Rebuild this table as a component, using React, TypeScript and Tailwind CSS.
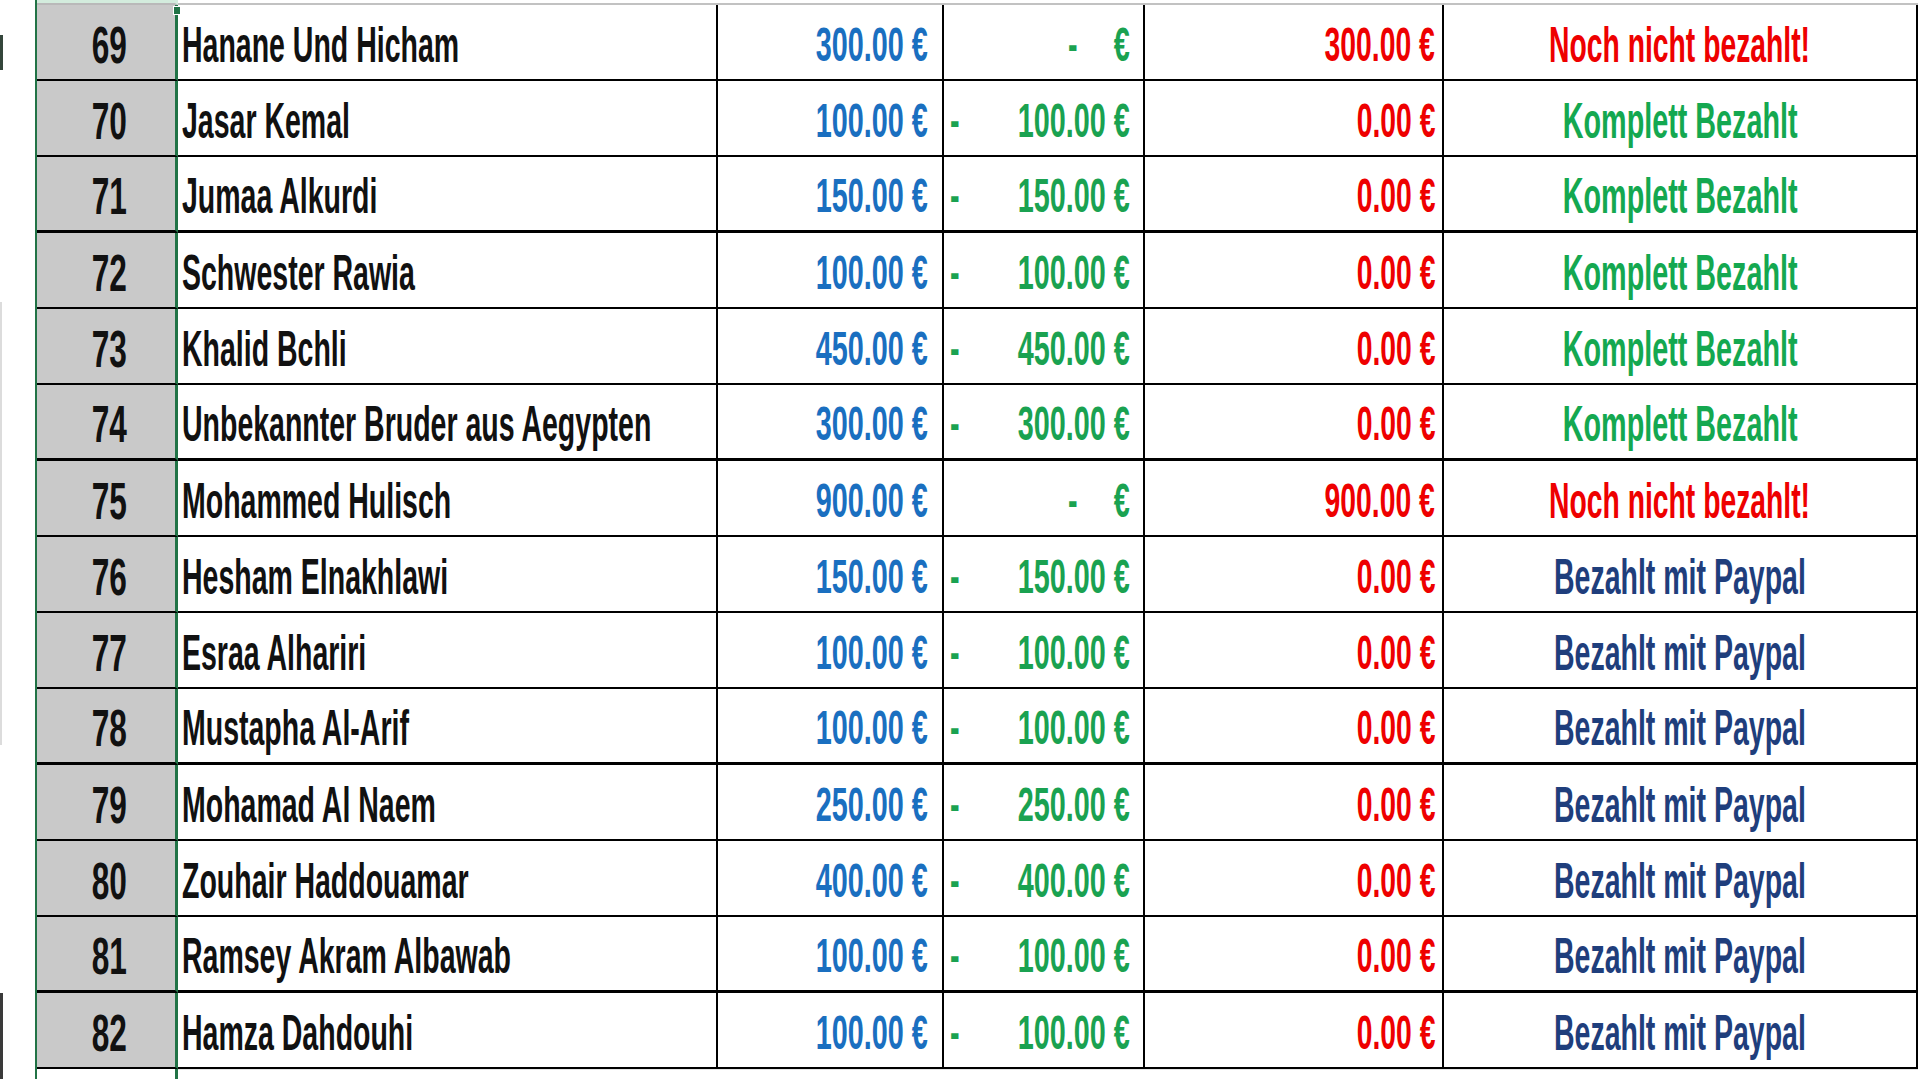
type Row = {
  n: number;
  name: string;
  amount: string;
  paid: string | null;
  rest: string;
  status: "open" | "full" | "paypal";
};

const rows: Row[] = [
  { n: 69, name: "Hanane Und Hicham", amount: "300.00", paid: null, rest: "300.00", status: "open" },
  { n: 70, name: "Jasar Kemal", amount: "100.00", paid: "100.00", rest: "0.00", status: "full" },
  { n: 71, name: "Jumaa Alkurdi", amount: "150.00", paid: "150.00", rest: "0.00", status: "full" },
  { n: 72, name: "Schwester Rawia", amount: "100.00", paid: "100.00", rest: "0.00", status: "full" },
  { n: 73, name: "Khalid Bchli", amount: "450.00", paid: "450.00", rest: "0.00", status: "full" },
  { n: 74, name: "Unbekannter Bruder aus Aegypten", amount: "300.00", paid: "300.00", rest: "0.00", status: "full" },
  { n: 75, name: "Mohammed Hulisch", amount: "900.00", paid: null, rest: "900.00", status: "open" },
  { n: 76, name: "Hesham Elnakhlawi", amount: "150.00", paid: "150.00", rest: "0.00", status: "paypal" },
  { n: 77, name: "Esraa Alhariri", amount: "100.00", paid: "100.00", rest: "0.00", status: "paypal" },
  { n: 78, name: "Mustapha Al-Arif", amount: "100.00", paid: "100.00", rest: "0.00", status: "paypal" },
  { n: 79, name: "Mohamad Al Naem", amount: "250.00", paid: "250.00", rest: "0.00", status: "paypal" },
  { n: 80, name: "Zouhair Haddouamar", amount: "400.00", paid: "400.00", rest: "0.00", status: "paypal" },
  { n: 81, name: "Ramsey Akram Albawab", amount: "100.00", paid: "100.00", rest: "0.00", status: "paypal" },
  { n: 82, name: "Hamza Dahdouhi", amount: "100.00", paid: "100.00", rest: "0.00", status: "paypal" },
];

// rows whose bottom line is drawn heavier
const thick = [71, 74, 78, 81];

function Status({ kind }: { kind: Row["status"] }) {
  if (kind === "open")
    return <span className="inline-block shrink-0 whitespace-nowrap text-[50px] leading-none font-bold text-[#ee0000] scale-x-[0.566] origin-center">Noch nicht bezahlt!</span>;
  if (kind === "full")
    return <span className="inline-block shrink-0 whitespace-nowrap text-[50px] leading-none font-bold text-[#14a850] scale-x-[0.575] origin-center">Komplett Bezahlt</span>;
  return <span className="inline-block shrink-0 whitespace-nowrap text-[50px] leading-none font-bold text-[#1f3e7c] scale-x-[0.57] origin-center">Bezahlt mit Paypal</span>;
}

function TableRow({ r }: { r: Row }) {
  const line = thick.includes(r.n) ? "border-b-[3px]" : "border-b-2";
  return (
    <div className="flex h-[76px]">
      <div className={`w-[141px] flex items-end justify-center pl-[6px] pb-[8px] bg-[#c9c9c9] border-r-[3px] border-r-[#217346] border-b-black ${line}`}>
        <span className="inline-block text-[51px] leading-none font-bold text-[#111] scale-x-[0.62] origin-center">{r.n}</span>
      </div>
      <div className={`w-[540px] flex items-end pl-[4px] pb-[9px] border-r-2 border-black ${line}`}>
        <span className="inline-block whitespace-nowrap text-[50px] leading-none font-bold text-[#111] scale-x-[0.57] origin-left">{r.name}</span>
      </div>
      <div className={`w-[226px] flex items-end justify-end pr-[14px] pb-[10px] border-r-2 border-black ${line}`}>
        <span className="inline-block shrink-0 whitespace-nowrap text-[48px] leading-none font-bold text-[#1a6fc0] scale-x-[0.6] origin-right">{r.amount} €</span>
      </div>
      <div className={`w-[201px] flex items-end pl-[6px] pr-[13px] pb-[10px] border-r-2 border-black ${line}`}>
        <div className="w-[10px] shrink-0">
          {r.paid && <span className="inline-block text-[48px] leading-none font-bold text-[#1aa251] scale-x-[0.6] origin-left">-</span>}
        </div>
        <div className="flex-1 min-w-0 flex justify-end">
          {r.paid ? (
            <span className="inline-block shrink-0 whitespace-nowrap text-[48px] leading-none font-bold text-[#1aa251] scale-x-[0.6] origin-right">{r.paid} €</span>
          ) : (
            <span className="inline-block shrink-0 whitespace-nowrap text-[48px] leading-none font-bold text-[#1aa251] scale-x-[0.6] origin-right">
              <span className="mr-[60px]">-</span>€
            </span>
          )}
        </div>
      </div>
      <div className={`w-[299px] flex items-end justify-end pr-[7px] pb-[10px] border-r-2 border-black ${line}`}>
        <span className="inline-block shrink-0 whitespace-nowrap text-[48px] leading-none font-bold text-[#ee0000] scale-x-[0.59] origin-right">{r.rest} €</span>
      </div>
      <div className={`w-[474px] flex items-end justify-center pb-[9px] border-r-2 border-black ${line}`}>
        <Status kind={r.status} />
      </div>
    </div>
  );
}

export default function App() {
  return (
    <div className="w-[1920px] h-[1079px] overflow-hidden bg-white flex font-['Liberation_Sans',Arial,sans-serif]">
      {/* edge of the neighbouring column */}
      <div className="w-[35px] flex flex-col">
        <div className="h-[35px]" />
        <div className="w-[3px] h-[35px] bg-[#34463b]" />
        <div className="h-[232px]" />
        <div className="w-[2px] h-[443px] bg-[#dcdcdc]" />
        <div className="flex-1" />
        <div className="w-[3px] h-[86px] bg-[#3a3a3a]" />
      </div>

      <div className="flex flex-col border-l-2 border-[#217346]">
        <div className="flex h-[5px]">
          <div className="relative w-[141px] bg-[#d3ecdd] border-b-2 border-b-[#b9b9b9] border-r-[3px] border-r-[#d3ecdd]">
            <div className="absolute -right-[6px] top-[6px] w-[8px] h-[9px] bg-[#217346] border border-white" />
          </div>
          <div className="w-[1740px] border-b-2 border-[#c2c2c2]" />
        </div>

        {rows.map((r) => (
          <TableRow key={r.n} r={r} />
        ))}

        <div className="flex flex-1">
          <div className="w-[141px] border-r-[3px] border-[#217346]" />
          <div className="w-[1740px] border-t border-[#e4e4e4]" />
        </div>
      </div>
    </div>
  );
}
